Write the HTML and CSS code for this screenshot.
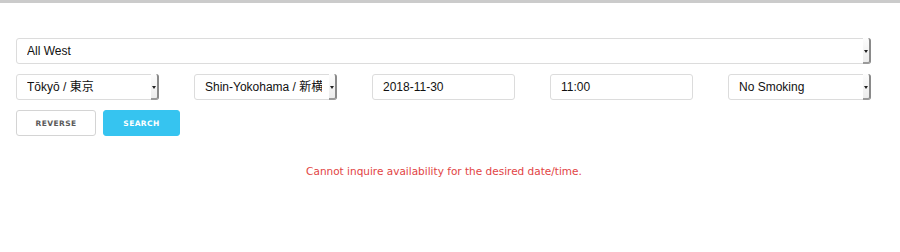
FILE: index.html
```html
<!DOCTYPE html>
<html>
<head>
  <title>Seat Search</title>
  <link rel="stylesheet" href="styles.css">
</head>
<body>

<div class="topbar"></div>

<div class="container">

  <!-- Line select -->
  <div class="field select-wrap">
    <select class="control">
      <option>All West</option>
    </select>
  </div>

  <!-- Route / date / time / car -->
  <div class="row">
    <div class="field select-wrap">
      <select class="control">
        <option>Tōkyō / 東京</option>
      </select>
    </div>
    <div class="field select-wrap">
      <select class="control">
        <option>Shin-Yokohama / 新横浜</option>
      </select>
    </div>
    <div class="field">
      <input type="text" class="control" value="2018-11-30">
    </div>
    <div class="field">
      <input type="text" class="control" value="11:00">
    </div>
    <div class="field select-wrap">
      <select class="control">
        <option>No Smoking</option>
      </select>
    </div>
  </div>

  <div class="buttons">
    <button class="btn btn-reverse">Reverse</button>
    <button class="btn btn-search">Search</button>
  </div>

  <p class="error">Cannot inquire availability for the desired date/time.</p>

</div>

</body>
</html>
```

FILE: styles.css
```css
body {
  font-family: "Liberation Sans", "Noto Sans CJK JP", sans-serif;
  margin: 0;
  padding: 0;
  background: #fff;
  color: #111;
}

.topbar {
  height: 3px;
  background: #cbcbcb;
}

.container {
  padding: 35px 29px 0 16px;
  display: flex;
  flex-direction: column;
  gap: 10px;
}

.row {
  display: flex;
  justify-content: space-between;
}

.row .field {
  width: 143px;
}

.field {
  position: relative;
  height: 26px;
}

.control {
  display: block;
  width: 100%;
  height: 26px;
  box-sizing: border-box;
  margin: 0;
  padding: 0 10px;
  border: 1px solid #dcdcdc;
  border-radius: 3px;
  background: #fff;
  font-family: "Liberation Sans", "Noto Sans CJK JP", sans-serif;
  font-size: 12px;
  color: #111;
  outline: none;
}

select.control {
  -webkit-appearance: none;
  appearance: none;
  padding-right: 14px;
}

/* mac style arrow strip at the right of each select */
.select-wrap::after {
  content: "";
  position: absolute;
  top: 0;
  right: 0;
  width: 8px;
  height: 26px;
  box-sizing: border-box;
  border-right: 2px solid #8a8a8a;
  border-bottom: 2px solid #9a9a9a;
  border-radius: 0 3px 3px 0;
  background: linear-gradient(#fdfdfd, #ececec);
}

.select-wrap::before {
  content: "";
  position: absolute;
  z-index: 1;
  top: 12px;
  right: 3px;
  border-left: 2px solid transparent;
  border-right: 2px solid transparent;
  border-top: 3px solid #222;
}

.buttons {
  display: flex;
  gap: 7px;
}

.btn {
  height: 26px;
  border-radius: 3px;
  font-family: "DejaVu Sans", sans-serif;
  font-size: 7.5px;
  font-weight: bold;
  letter-spacing: 0.4px;
  text-transform: uppercase;
  cursor: pointer;
}

.btn-reverse {
  width: 80px;
  background: #fff;
  border: 1px solid #d4d4d4;
  color: #5a5a5a;
}

.btn-search {
  width: 77px;
  background: #36c4f0;
  border: 1px solid #36c4f0;
  color: #fff;
}

.error {
  margin: 19px 0 0;
  text-align: center;
  color: #e24444;
  font-family: "DejaVu Sans", sans-serif;
  font-size: 10.5px;
  padding-left: 1px;
}
```
